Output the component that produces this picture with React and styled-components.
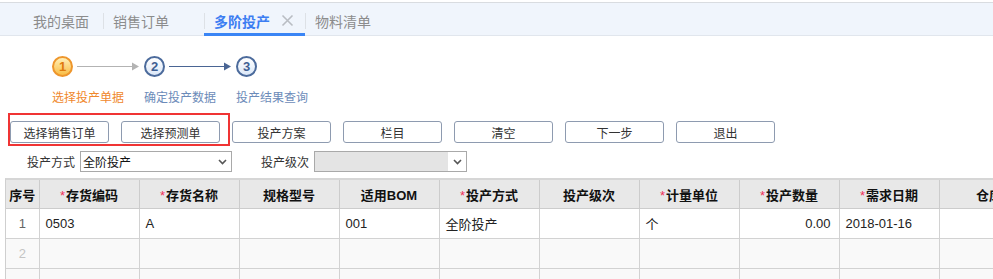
import React from "react";
import styled, { createGlobalStyle, css } from "styled-components";

const GlobalStyle = createGlobalStyle`
  html, body { margin: 0; padding: 0; background: #fff; }
  body {
    font-family: "Liberation Sans", "Noto Sans CJK SC", Arial, sans-serif;
    color: #333;
    overflow: hidden;
  }
`;

const Page = styled.div`
  width: 993px;
  height: 279px;
  overflow: hidden;
`;

const TabBar = styled.div`
  margin-top: 2px;
  height: 32px;
  border-top: 1px solid #d9dce0;
  border-bottom: 1px solid #e1e6ed;
  background: #f0f5fc;
  display: flex;
  align-items: stretch;
  padding-left: 22px;
`;

const Tab = styled.div`
  position: relative;
  display: flex;
  align-items: center;
  box-sizing: border-box;
  padding: 3px 0 0 ${(p) => (p.$first ? 11 : 10)}px;
  width: ${(p) => (p.$first ? "81px" : "101px")};
  font-size: 14px;
  color: ${(p) => (p.$active ? "#3d7ef2" : "#8c8c8c")};
  font-weight: ${(p) => (p.$active ? 600 : 400)};
  ${(p) =>
    !p.$first &&
    css`
      &::before {
        content: "";
        position: absolute;
        left: 0;
        top: 10px;
        height: 16px;
        width: 1px;
        background: #dde1e6;
      }
    `}
  ${(p) =>
    p.$active &&
    css`
      &::after {
        content: "";
        position: absolute;
        left: 0;
        right: 0;
        bottom: -1px;
        height: 3px;
        background: #3a85f5;
      }
    `}
`;

const Close = styled.span`
  margin-left: 11px;
  display: inline-flex;
  color: #b8bcc2;
`;

const Steps = styled.div`
  margin-top: 20px;
  padding-left: 52px;
  display: grid;
  grid-template-columns: repeat(3, 92px);
  row-gap: 13px;
`;

const StepHead = styled.div`
  display: flex;
  align-items: center;
  height: 21px;
`;

const Circle = styled.div`
  width: 21px;
  height: 21px;
  box-sizing: border-box;
  border-radius: 50%;
  display: flex;
  align-items: center;
  justify-content: center;
  font-size: 13px;
  font-weight: 700;
  ${(p) =>
    p.$current
      ? css`
          border: 2px solid #ee962c;
          background: linear-gradient(#fff0b8, #f9bd45);
          color: #e07a0c;
        `
      : css`
          border: 2px solid #4c6b9c;
          background: linear-gradient(#ffffff, #dce8f8);
          color: #3f5f93;
        `}
`;

const Connector = styled.svg`
  margin-left: 4px;
  display: block;
`;

const StepLabel = styled.div`
  font-size: 12px;
  line-height: 16px;
  color: ${(p) => (p.$current ? "#f0882c" : "#6c8bb9")};
`;

const ButtonRow = styled.div`
  position: relative;
  margin-top: 15px;
  padding-left: 10px;
  display: flex;
  gap: 12px;
`;

const Button = styled.button`
  width: 99px;
  height: 22px;
  box-sizing: border-box;
  border: 1px solid #8e9bb0;
  border-radius: 3px;
  background: #fff;
  font-family: inherit;
  font-size: 12px;
  color: #333;
  padding: 0;
`;

const Highlight = styled.div`
  position: absolute;
  left: 8px;
  top: -8px;
  width: 222px;
  height: 33px;
  box-sizing: border-box;
  border: 2px solid #f03434;
  pointer-events: none;
`;

const FormRow = styled.div`
  margin-top: 8px;
  display: flex;
  align-items: center;
  height: 21px;
  padding-left: 27px;
`;

const FieldLabel = styled.span`
  font-size: 12px;
  color: #333;
  margin-right: ${(p) => p.$gap}px;
`;

const Select = styled.div`
  width: ${(p) => p.$width}px;
  height: 21px;
  box-sizing: border-box;
  border: 1px solid #a9a9a9;
  display: flex;
  align-items: stretch;
  background: ${(p) => (p.$disabled ? "#e4e4e4" : "#fff")};
  margin-right: ${(p) => p.$after || 0}px;
`;

const SelectText = styled.span`
  flex: 1;
  font-size: 12px;
  color: #111;
  padding-left: 2px;
  display: flex;
  align-items: center;
`;

const Chevron = styled.span`
  width: 18px;
  background: #fff;
  display: flex;
  align-items: center;
  justify-content: center;
`;

const TableWrap = styled.div`
  margin-top: 6px;
  margin-left: 5px;
  border-top: 2px solid #d6d6d6;
  border-left: 1px solid #cfcfcf;
  overflow: hidden;
`;

const Table = styled.table`
  border-collapse: collapse;
  table-layout: fixed;
  width: 1133px;
  font-size: 13px;
`;

const Th = styled.th`
  height: 28px;
  padding: 0;
  background: #e8e8e8;
  border-right: 1px solid #cccccc;
  border-bottom: 1px solid #cccccc;
  font-weight: 700;
  color: #111;
  text-align: center;
  white-space: nowrap;
`;

const Star = styled.span`
  color: #f0305a;
  font-weight: 400;
  margin-right: 1px;
`;

const Tr = styled.tr`
  background: ${(p) => (p.$alt ? "#f9f9f9" : "#fff")};
`;

const Td = styled.td`
  height: 29px;
  padding: 0 ${(p) => (p.$align === "right" ? 8 : 6)}px 0 6px;
  border-right: 1px solid #d2d2d2;
  border-bottom: 1px solid #d2d2d2;
  text-align: ${(p) => p.$align || "left"};
  color: ${(p) => p.$color || "#222"};
  white-space: nowrap;
`;

const ChevronIcon = () => (
  <svg width="9" height="6" viewBox="0 0 9 6">
    <path d="M1 1 L4.5 4.5 L8 1" fill="none" stroke="#555" strokeWidth="1.6" />
  </svg>
);

const Arrow = ({ color }) => (
  <Connector width="62" height="9" viewBox="0 0 62 9">
    <line x1="0" y1="4.5" x2="56" y2="4.5" stroke={color} strokeWidth="1.2" />
    <path d="M55 0.5 L62 4.5 L55 8.5 Z" fill={color} />
  </Connector>
);

const columns = [
  { label: "序号", w: 33 },
  { label: "存货编码", req: true },
  { label: "存货名称", req: true },
  { label: "规格型号" },
  { label: "适用BOM" },
  { label: "投产方式", req: true },
  { label: "投产级次" },
  { label: "计量单位", req: true },
  { label: "投产数量", req: true },
  { label: "需求日期", req: true },
  { label: "仓库" },
  { label: "备注" },
];

const rows = [
  ["1", "0503", "A", "", "001", "全阶投产", "", "个", "0.00", "2018-01-16", "", ""],
  ["2", "", "", "", "", "", "", "", "", "", "", ""],
  ["3", "", "", "", "", "", "", "", "", "", "", ""],
];

export default function App() {
  return (
    <Page>
      <GlobalStyle />
      <TabBar>
        <Tab $first>我的桌面</Tab>
        <Tab>销售订单</Tab>
        <Tab $active>
          多阶投产
          <Close>
            <svg width="13" height="13" viewBox="0 0 13 13">
              <path d="M1.5 1.5 L11.5 11.5 M11.5 1.5 L1.5 11.5" stroke="#b9bdc3" strokeWidth="1.6" />
            </svg>
          </Close>
        </Tab>
        <Tab>物料清单</Tab>
      </TabBar>

      <Steps>
        <StepHead>
          <Circle $current>1</Circle>
          <Arrow color="#b3b3b3" />
        </StepHead>
        <StepHead>
          <Circle>2</Circle>
          <Arrow color="#4a6594" />
        </StepHead>
        <StepHead>
          <Circle>3</Circle>
        </StepHead>
        <StepLabel $current>选择投产单据</StepLabel>
        <StepLabel>确定投产数据</StepLabel>
        <StepLabel>投产结果查询</StepLabel>
      </Steps>

      <ButtonRow>
        <Button>选择销售订单</Button>
        <Button>选择预测单</Button>
        <Button>投产方案</Button>
        <Button>栏目</Button>
        <Button>清空</Button>
        <Button>下一步</Button>
        <Button>退出</Button>
        <Highlight />
      </ButtonRow>

      <FormRow>
        <FieldLabel $gap={5}>投产方式</FieldLabel>
        <Select $width={152} $after={29}>
          <SelectText>全阶投产</SelectText>
          <Chevron>
            <ChevronIcon />
          </Chevron>
        </Select>
        <FieldLabel $gap={5}>投产级次</FieldLabel>
        <Select $width={153} $disabled>
          <SelectText />
          <Chevron>
            <ChevronIcon />
          </Chevron>
        </Select>
      </FormRow>

      <TableWrap>
        <Table>
          <colgroup>
            {columns.map((c, i) => (
              <col key={i} style={{ width: c.w || 100 }} />
            ))}
          </colgroup>
          <thead>
            <tr>
              {columns.map((c, i) => (
                <Th key={i}>
                  {c.req && <Star>*</Star>}
                  {c.label}
                </Th>
              ))}
            </tr>
          </thead>
          <tbody>
            {rows.map((r, ri) => (
              <Tr key={ri} $alt={ri > 0}>
                {r.map((v, ci) => (
                  <Td
                    key={ci}
                    $align={ci === 0 ? "center" : ci === 8 ? "right" : "left"}
                    $color={ci === 0 ? (ri === 0 ? "#666" : "#c4c4c4") : undefined}
                  >
                    {v}
                  </Td>
                ))}
              </Tr>
            ))}
          </tbody>
        </Table>
      </TableWrap>
    </Page>
  );
}
